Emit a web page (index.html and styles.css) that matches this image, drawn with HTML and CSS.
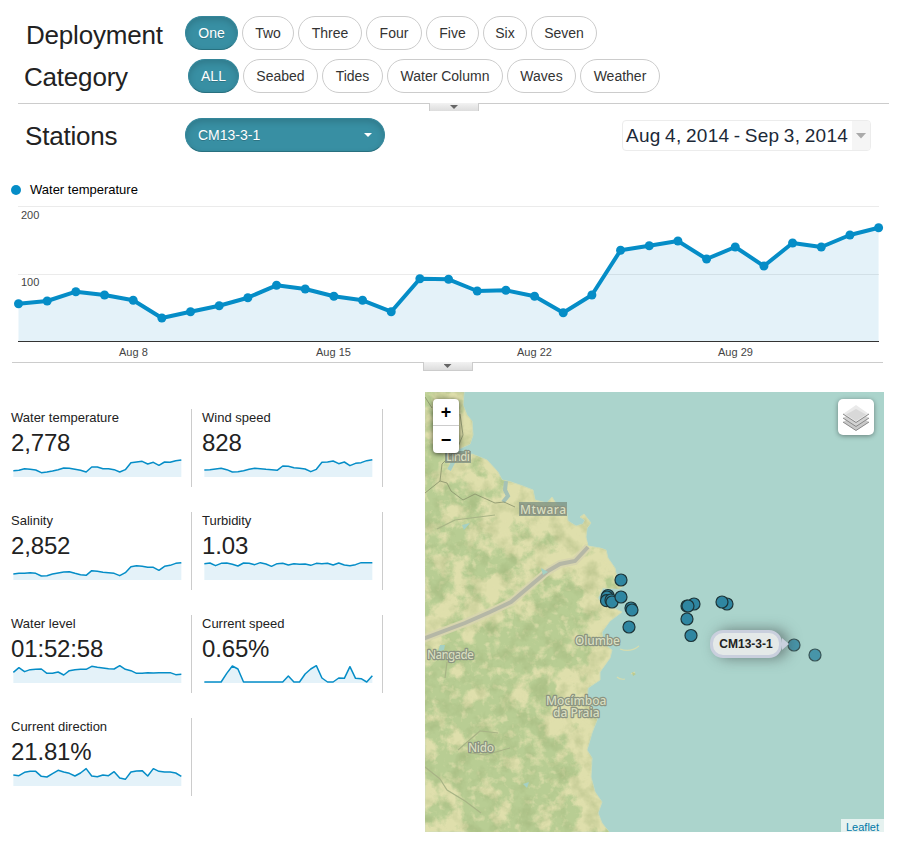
FILE: index.html
```html
<!DOCTYPE html>
<html lang="en">
<head>
<meta charset="utf-8">
<title>Stations</title>
<link rel="stylesheet" href="styles.css">
</head>
<body>
<header class="filters">
  <div class="filter-row">
    <h2 class="heading heading-deployment">Deployment</h2>
    <div class="pills pills-deployment">
      <button class="pill active">One</button><button class="pill">Two</button><button class="pill">Three</button><button class="pill">Four</button><button class="pill">Five</button><button class="pill">Six</button><button class="pill">Seven</button>
    </div>
  </div>
  <div class="filter-row">
    <h2 class="heading heading-category">Category</h2>
    <div class="pills pills-category">
      <button class="pill active">ALL</button><button class="pill">Seabed</button><button class="pill">Tides</button><button class="pill">Water Column</button><button class="pill">Waves</button><button class="pill">Weather</button>
    </div>
  </div>
</header>
<div class="splitter splitter-top"><span class="handle"><i></i></span></div>
<section class="stations">
  <h2 class="heading heading-stations">Stations</h2>
  <div class="select"><span>CM13-3-1</span><i></i></div>
  <div class="date"><span class="range">Aug 4, 2014 - Sep 3, 2014</span><span class="date-arrow"><i></i></span></div>
</section>
<section class="chart">
  <div class="legend"><i></i><span>Water temperature</span></div>
  <svg id="main-chart" width="897" height="162" viewBox="0 199 897 162">
    <path d="M18 206.5H879M18 274.5H879" stroke="#ebebeb"/>
    <polygon id="main-area" fill="#058dc7" fill-opacity=".11"/>
    <path d="M18 341.5H879" stroke="#333"/>
    <polyline id="main-line" fill="none" stroke="#058dc7" stroke-width="4" stroke-linejoin="round"/>
    <g id="main-dots" fill="#058dc7"></g>
    <g class="axis">
      <text x="21" y="219">200</text><text x="21" y="286">100</text>
      <text x="119" y="356">Aug 8</text><text x="316" y="356">Aug 15</text><text x="517" y="356">Aug 22</text><text x="718" y="356">Aug 29</text>
    </g>
  </svg>
</section>
<div class="splitter splitter-bottom"><span class="handle"><i></i></span></div>
<main class="content">
  <section class="cards">
    <article class="card"><h3>Water temperature</h3><p>2,778</p><svg class="spark" data-top="201" data-values="242,241,236,238,240,248,246,243,239,234,235,238,241,246,231,231,236,236,239,246,239,218,216,214,222,217,226,216,217,212,210"></svg></article>
    <article class="card"><h3>Wind speed</h3><p>828</p><svg class="spark" data-top="201" data-values="240,239,237,235,239,246,245,242,238,235,236,238,239,241,228,229,233,235,237,245,238,217,216,213,221,216,227,220,218,212,209"></svg></article>
    <article class="card"><h3>Salinity</h3><p>2,852</p><svg class="spark" data-top="510" data-values="552,550,550,548,550,558,557,552,549,546,545,550,554,556,542,544,547,548,550,557,548,530,527,529,532,532,541,529,526,520,518"></svg></article>
    <article class="card"><h3>Turbidity</h3><p>1.03</p><svg class="spark" data-top="510" data-values="521,519,527,520,519,523,528,519,520,524,518,522,529,521,520,525,521,523,522,526,520,521,520,525,519,525,527,524,518,518,518"></svg></article>
    <article class="card"><h3>Water level</h3><p>01:52:58</p><svg class="spark" data-top="189" data-values="217,203,215,209,208,207,220,220,216,225,212,209,208,208,199,202,204,206,207,197,208,212,220,220,218,219,218,218,218,224,223"></svg></article>
    <article class="card"><h3>Current speed</h3><p>0.65%</p><svg class="spark" data-top="189" data-values="246,246,246,246,220,198,207,246,246,246,246,246,246,246,246,228,246,246,222,207,197,234,246,246,234,235,200,235,236,246,227"></svg></article>
    <article class="card"><h3>Current direction</h3><p>21.81%</p><svg class="spark" data-top="498" data-values="525,527,517,514,514,529,531,521,511,516,520,528,519,506,528,530,525,527,515,534,538,516,513,512,528,506,514,516,516,519,529"></svg></article>
  </section>
  <section class="map">
    <svg class="tiles" width="459" height="440" viewBox="425 392 459 440">
      <defs>
        <path id="land" d="M425 392H464L463 405 467 415 472 421 473 435 470 444 459 449 457 458 472 454 487 460 498 472 502 480 511 482 520 485 533 490 535 500 547 503 552 497 557 505 566 508 568 521 576 526 583 524 585 520 580 517 584 514 591 523 587 528 586 537 588 546 600 548 606 550 608 558 615 568 617 578 625 585 619 589 603 588 598 598 601 603 607 607 616 609 622 612 610 621 602 632 603 643 612 650 610 658 600 672 600 680 588 688 587 700 597 713 597 720 592 733 587 750 592 758 591 777 595 792 602 802 598 813 602 823 609 832H425Z"/>
        <clipPath id="land-clip"><use href="#land"/></clipPath>
        <filter id="forest" filterUnits="userSpaceOnUse" x="385" y="352" width="539" height="520" color-interpolation-filters="sRGB">
          <feGaussianBlur in="SourceGraphic" stdDeviation="11" result="b"/>
          <feTurbulence type="fractalNoise" baseFrequency=".045" numOctaves="5" seed="8"/>
          <feColorMatrix values="0 0 0 0 0 0 0 0 0 0 0 0 0 0 0 1 0 0 0 0" result="n"/>
          <feComposite in="b" in2="n" operator="arithmetic" k1="0" k2=".5" k3="1.1" k4="-.53"/>
          <feComponentTransfer result="m"><feFuncA type="linear" slope="5" intercept="-1"/></feComponentTransfer>
          <feFlood flood-color="#b8cd93"/>
          <feComposite in2="m" operator="in"/>
        </filter>
        <filter id="relief" filterUnits="userSpaceOnUse" x="425" y="392" width="459" height="440" color-interpolation-filters="sRGB">
          <feTurbulence type="fractalNoise" baseFrequency=".06" numOctaves="4" seed="21"/>
          <feColorMatrix values="0 0 0 0 .58 0 0 0 0 .66 0 0 0 0 .43 0 1 0 0 -.45"/>
        </filter>
        <filter id="speckle" filterUnits="userSpaceOnUse" x="425" y="392" width="459" height="440" color-interpolation-filters="sRGB">
          <feTurbulence type="fractalNoise" baseFrequency=".13" numOctaves="3" seed="5"/>
          <feColorMatrix values="0 0 0 0 .88 0 0 0 0 .875 0 0 0 0 .68 0 4 0 0 -2.2"/>
        </filter>
        <filter id="soft"><feGaussianBlur stdDeviation=".6"/></filter>
      </defs>
      <path fill="#abd4cc" d="M425 392h459v440H425z"/>
      <use href="#land" fill="#dfdfac" stroke="#cfdcb8" stroke-width="1"/>
      <g clip-path="url(#land-clip)">
        <g filter="url(#forest)">
          <path d="M400 370H446V450L480 464 510 500 480 530 545 530 555 560 520 592 425 627H400Z" fill-opacity=".6"/>
          <path d="M400 650L500 615 545 585 590 572 600 600 585 630 580 675 555 700 540 730 575 760 580 850H465L440 780 400 750Z" fill-opacity=".88"/>
          <path d="M400 750H470V850H400Z" fill-opacity=".35"/>
        </g>
        <path filter="url(#speckle)" opacity=".7" d="M425 392h190v440H425z"/>
        <path filter="url(#relief)" d="M425 392h190v440H425z"/>
        <g fill="none" filter="url(#soft)">
          <path d="M425 767L440 779 447 790 465 801 481 813M458 750L480 731 498 733M437 529L455 520 495 515M470 753L485 755 510 748M447 662L445 678" stroke="#a8b486" stroke-width="1.2"/>
          <path d="M588 547L575 561 560 564 548 571 530 586 511 602 490 612 465 623 420 640" stroke="#d7d5ae" stroke-width="8"/>
          <path d="M588 547L575 561 560 564 548 571 530 586 511 602 490 612 465 623 420 640" stroke="#b5b7a6" stroke-width="4"/>
          <path d="M506 481L505 490 508 496 503 502" stroke="#a5c2b6" stroke-width="4"/>
          <path d="M457 455L449 470" stroke="#a8cfc5" stroke-width="4"/>
        </g>
        <path d="M425 397L432 408M425 493L440 481 442 464 457 449 463 435 460 414M440 481L447 483 451 491 463 500 475 494 495 503 504 502 515 507" fill="none" stroke="#88906b" stroke-width=".8"/>
        <path d="M440 645L445 645 444 650 438 652ZM523 784L529 782 527 788ZM541 568L548 572 543 575ZM462 525L470 523 464 530Z" fill="#a5d0c3"/>
      </g>
      <path d="M620 649Q630 653 639 646M617 677Q620 680 625 679M631 674L635 672" fill="none" stroke="#d5dcae" stroke-width="1.200"/>
      <path d="M632 672L636 674 633 676Z" fill="#bdca8c"/>
      <g class="boxes"><path d="M445 451h26v12h-26zM519 502h48v14h-48z"/></g>
      <g class="places">
        <text x="446" y="461" textLength="24">Lindi</text>
        <text x="520" y="514" textLength="46">Mtwara</text>
        <text x="575" y="645" textLength="45">Olumbe</text>
        <text x="427" y="659" textLength="47">Nangade</text>
        <text><tspan x="546" y="705">Mocímboa</tspan> <tspan x="553" y="717">da Praia</tspan></text>
        <text x="468" y="752" textLength="26">Nido</text>
      </g>
      <g class="markers">
        <circle cx="621" cy="580" r="6"/><circle cx="608" cy="595.5" r="6"/><circle cx="607" cy="597" r="6"/><circle cx="606.5" cy="600.7" r="6"/><circle cx="611" cy="600" r="6"/><circle cx="612" cy="602" r="6"/><circle cx="621" cy="597" r="6"/><circle cx="631" cy="608" r="6"/><circle cx="632" cy="610" r="6"/><circle cx="629" cy="627" r="6"/><circle cx="694" cy="604" r="6"/><circle cx="687" cy="606" r="6"/><circle cx="688" cy="606" r="6"/><circle cx="687" cy="619" r="6"/><circle cx="691" cy="635.5" r="6"/><circle cx="727" cy="604" r="6"/><circle cx="722" cy="602" r="6"/>
        <circle class="faded" cx="794" cy="645" r="6"/><circle class="faded" cx="815" cy="655" r="6"/>
      </g>
    </svg>
    <div class="zoom"><button>+</button><button>−</button></div>
    <div class="layers"><svg width="26" height="26" viewBox="0 0 26 26">
      <path d="M13 9L26 17 13 25.500 0 17Z" fill="#c9c9c9"/><path d="M0 17L13 25.500 26 17" fill="none" stroke="#888"/>
      <path d="M13 5L26 13 13 21.500 0 13Z" fill="#d2d2d2"/><path d="M0 13L13 21.500 26 13" fill="none" stroke="#888"/>
      <path d="M13 0L26 9 13 17.500 0 9Z" fill="#eaeaea"/><path d="M13 4L23 9.500 13 16 3 9.500Z" fill="#d8d8d8"/><path d="M0 9L13 17.500 26 9" fill="none" stroke="#888"/>
    </svg></div>
    <div class="tip">CM13-3-1</div>
    <a class="attribution">Leaflet</a>
  </section>
</main>
<script src="app.js"></script>
</body>
</html>
```
FILE: styles.css
```css
* { box-sizing: border-box; }
body { margin: 0; width: 897px; height: 849px; overflow: hidden; background: #fff; color: #222; font-family: "Liberation Sans", Arial, sans-serif; font-size: 13px; }
h2, h3, p { margin: 0; font-weight: 400; }
svg { display: block; }
button { font-family: inherit; margin: 0; }
.filters { height: 103px; padding-top: 16px; }
.filter-row { display: flex; height: 43px; }
.heading { font-size: 26px; line-height: 34px; letter-spacing: -.2px; white-space: nowrap; padding-top: 2px; }
.heading-deployment { width: 185px; padding-left: 26px; }
.heading-category { width: 188px; padding-left: 24px; padding-top: 1px; }
.heading-stations { width: 185px; padding-left: 25px; padding-top: 1px; }
.pills { display: grid; column-gap: 4px; height: 34px; }
.pills-deployment { grid-template-columns: 53px 52px 64px 56px 53px 44px 66px; }
.pills-category { grid-template-columns: 51px 75px 61px 116px 69px 80px; }
.pill { height: 34px; padding: 0; border: 1px solid #ccc; border-radius: 17px; background: #fff; color: #333; font-size: 14px; white-space: nowrap; }
.pill.active, .select { background: #388fa3; border: 1px solid #34869a; border-bottom-color: #28707f; color: #fff; box-shadow: inset 0 3px 6px rgba(0, 0, 0, .15); text-shadow: 0 1px 0 rgba(0, 0, 0, .2); }
.splitter { display: flex; justify-content: center; border-top: 1px solid #ccc; }
.splitter-top { margin: 0 8px 0 18px; height: 15px; }
.splitter-top .handle { margin-left: 1px; height: 8px; border-bottom: 0; }
.splitter-bottom { margin: 1px 14px 0 12px; height: 30px; }
.handle { display: flex; justify-content: center; width: 50px; height: 9px; margin-top: -1px; border: 1px solid #ccc; border-top: 0; background: linear-gradient(#f2f2f2, #ddd); }
.handle i { margin-top: 2px; width: 8px; height: 4px; background: #666; clip-path: polygon(0 0, 100% 0, 50% 100%); }
.stations { display: flex; height: 62px; }
.select { display: flex; align-items: center; justify-content: space-between; width: 200px; height: 34px; padding: 0 12px; border-radius: 17px; font-size: 14px; }
.select i { width: 8px; height: 4px; background: #fff; clip-path: polygon(0 0, 100% 0, 50% 100%); }
.date { display: flex; width: 249px; height: 31px; margin: 2px 0 0 237px; border: 1px solid #ececec; border-radius: 4px; overflow: hidden; }
.range { width: 229px; padding-left: 3px; font-size: 19px; line-height: 29px; letter-spacing: .3px; word-spacing: -1.2px; color: #1c2938; white-space: nowrap; }
.date-arrow { display: flex; align-items: center; justify-content: center; width: 18px; background: #f5f5f5; }
.date-arrow i { width: 11px; height: 6px; background: #aaa; clip-path: polygon(0 0, 100% 0, 50% 100%); }
.chart { height: 181px; }
.legend { display: flex; align-items: center; gap: 9px; height: 19px; padding-left: 11px; color: #000; }
.legend i { width: 10px; height: 10px; border-radius: 50%; background: #058dc7; }
.axis { font-size: 11px; fill: #444; }
.content { display: grid; grid-template-columns: 414px 459px; margin-left: 11px; }
.cards { display: grid; grid-template-columns: 181px 181px; column-gap: 10px; grid-auto-rows: 78px; row-gap: 25px; padding-top: 17px; }
.card { border-right: 1px solid #ccc; height: 78px; padding-top: 1px; }
.card h3 { font-size: 13px; line-height: 16px; }
.card p { font-size: 24px; line-height: 34px; height: 31px; letter-spacing: -.15px; }
.map { position: relative; width: 459px; height: 440px; overflow: hidden; }
.boxes { fill: #809385; fill-opacity: .8; }
.places { font-family: "Noto Sans", sans-serif; font-size: 12px; font-weight: 500; fill: #d9dec0; stroke: #8b9481; stroke-width: 2.4px; paint-order: stroke; stroke-linejoin: round; }
.markers { fill: #2f86a1; stroke: #1c3438; stroke-width: 1.2px; }
.faded { opacity: .8; }
.zoom { position: absolute; left: 8px; top: 7px; width: 26px; border-radius: 4px; background: #fff; box-shadow: 0 1px 5px rgba(0, 0, 0, .65); }
.zoom button { display: block; width: 26px; height: 27px; padding: 0; border: 0; background: none; color: #000; font-size: 18px; line-height: 26px; font-weight: 700; }
.zoom button:first-child { border-bottom: 1px solid #ccc; }
.layers { position: absolute; left: 413px; top: 7px; width: 36px; height: 36px; padding: 6px 5px; border-radius: 5px; background: #fff; box-shadow: 0 1px 5px rgba(0, 0, 0, .4); }
.tip { position: absolute; left: 285px; top: 238px; width: 72px; height: 28px; border: 3px solid #c9cfdd; border-radius: 13px; background: #e4e9e8; color: #222; font-size: 12px; line-height: 22px; font-weight: 700; text-align: center; box-shadow: 6px 0 14px rgba(70, 80, 80, .65); }
.tip::after { content: ""; position: absolute; left: 69px; top: 5px; width: 7px; height: 12px; background: #c9cfdd; clip-path: polygon(0 0, 100% 50%, 0 100%); }
.attribution { position: absolute; right: 0; bottom: 0; width: 43px; height: 13px; padding-left: 5px; font-size: 11px; line-height: 16px; color: #0078a8; background: rgba(255, 255, 255, .7); }
```
FILE: app.js
```js
const temps = [303.7,301,291.7,295,300.3,318,311.7,305.7,297.7,285.3,289,296.3,300.3,311.7,278.7,279.3,291,290.3,296.3,312.7,295,250.3,245.7,241,259,247,266,243,247,235,227.7];
const points = temps.map((y, i) => [18.5 + i * 28.67, y]);
const line = points.map(p => p.join(",")).join(" ");
document.getElementById("main-line").setAttribute("points", line);
document.getElementById("main-area").setAttribute("points", `18.5,341 ${line} 878.6,341`);
document.getElementById("main-dots").innerHTML = points.map(p => `<circle cx="${p[0]}" cy="${p[1]}" r="4.5"/>`).join("");

// Sparklines use three units per pixel.
document.querySelectorAll(".spark").forEach(svg => {
  const top = +svg.dataset.top;
  const pts = svg.dataset.values.split(",").map((y, i) => `${7 + i * 16.8},${y}`).join(" ");
  svg.setAttribute("width", 171);
  svg.setAttribute("height", 21);
  svg.setAttribute("viewBox", `0 ${top} 513 63`);
  svg.innerHTML = `<polygon points="7,${top + 60} ${pts} 511,${top + 60}" fill="#058dc7" fill-opacity=".11"/><polyline points="${pts}" fill="none" stroke="#058dc7" stroke-width="4.5" stroke-linejoin="round"/>`;
});
```
